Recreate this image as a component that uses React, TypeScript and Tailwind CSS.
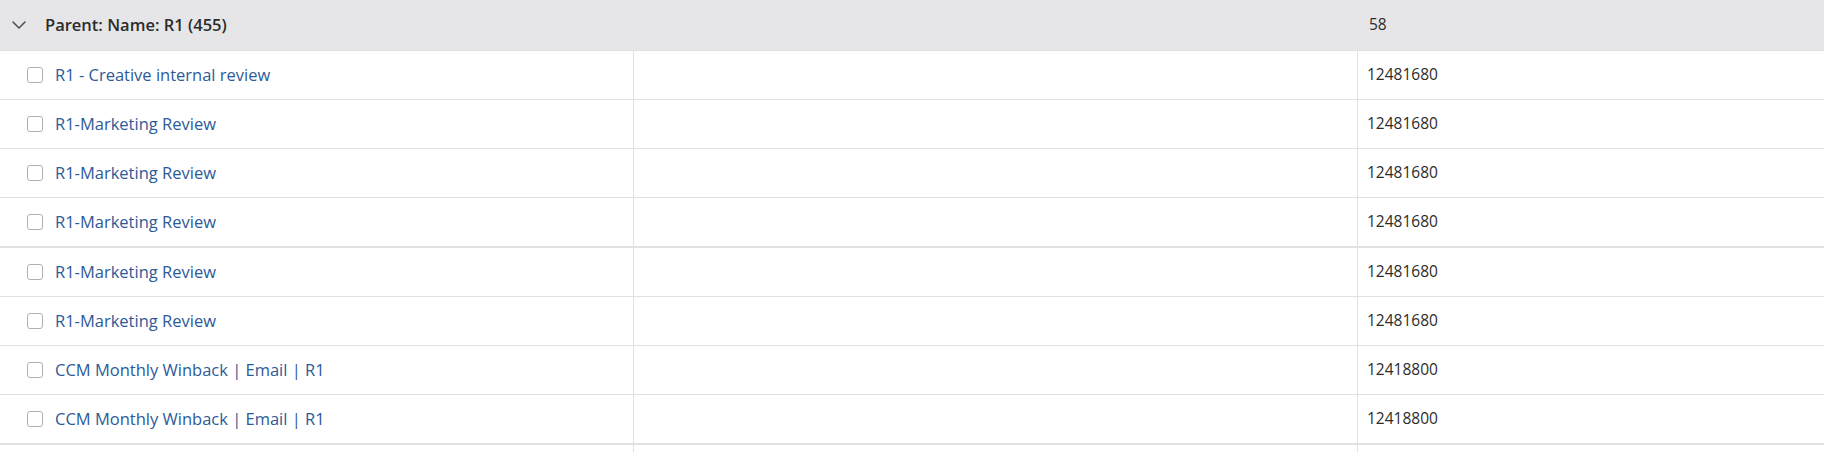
import React from 'react';
import { ChevronDown } from 'lucide-react';

type Row = { name: string; value: string; thick?: boolean };

const rows: Row[] = [
  { name: 'R1 - Creative internal review', value: '12481680' },
  { name: 'R1-Marketing Review', value: '12481680' },
  { name: 'R1-Marketing Review', value: '12481680' },
  { name: 'R1-Marketing Review', value: '12481680', thick: true },
  { name: 'R1-Marketing Review', value: '12481680' },
  { name: 'R1-Marketing Review', value: '12481680' },
  { name: 'CCM Monthly Winback | Email | R1', value: '12418800' },
  { name: 'CCM Monthly Winback | Email | R1', value: '12418800', thick: true },
];

const App: React.FC = () => {
  return (
    <div className="w-[1824px] h-[452px] overflow-hidden bg-white font-['Open_Sans',sans-serif] text-[15.5px] text-[#2c2c2c]">
      {/* Group header */}
      <div className="flex h-[51px] items-center border-b border-[#e0e0e2] bg-[#e6e6e8]">
        <div className="flex w-[1366px] items-center">
          <ChevronDown className="ml-[7px] h-6 w-6 text-[#4b4b4b]" strokeWidth={1.5} />
          <span className="ml-[14px] text-[16.5px] font-semibold">Parent: Name: R1 (455)</span>
        </div>
        <span className="ml-[3px]">58</span>
      </div>

      {/* Rows */}
      {rows.map((row, i) => (
        <div
          key={i}
          className={`flex border-[#e1e1e1] ${row.thick ? 'h-[50px] border-b-2' : 'h-[49px] border-b'}`}
        >
          <div className="flex w-[634px] items-center border-r border-[#e1e1e1]">
            <span className="ml-[27px] h-4 w-4 rounded-[3px] border-[1.5px] border-[#b1b1b1] bg-white"></span>
            <a className="ml-[12px] cursor-pointer text-[16.5px] text-[#2d5a98]">{row.name}</a>
          </div>
          <div className="w-[724px] border-r border-[#e1e1e1]"></div>
          <div className="flex flex-1 items-center pl-[9px]">{row.value}</div>
        </div>
      ))}
      <div className="flex h-[20px]">
        <div className="w-[634px] border-r border-[#e1e1e1]"></div>
        <div className="w-[724px] border-r border-[#e1e1e1]"></div>
      </div>
    </div>
  );
};

export default App;
